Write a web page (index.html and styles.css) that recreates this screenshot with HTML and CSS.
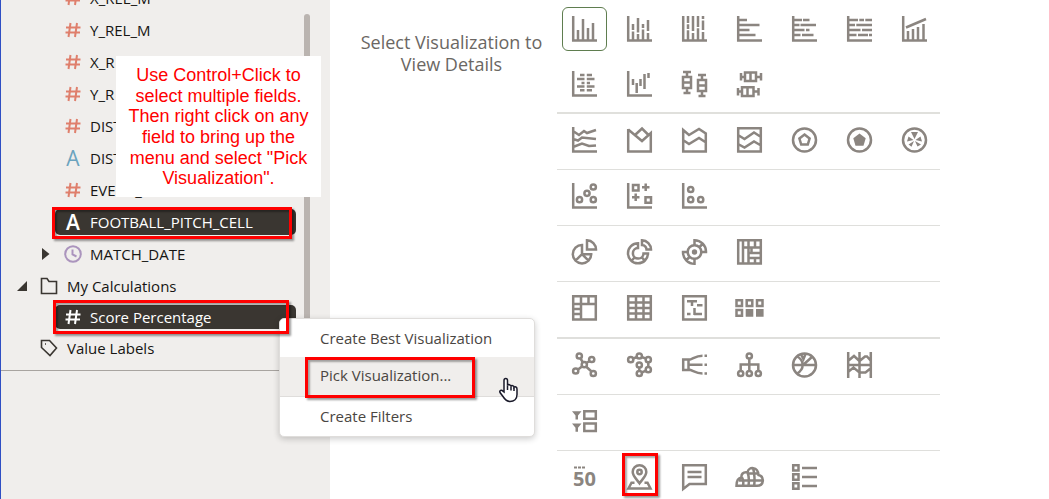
FILE: index.html
```html
<!DOCTYPE html>
<html lang="en">
<head>
<meta charset="utf-8">
<title>Pick Visualization</title>
<link rel="stylesheet" href="styles.css">
</head>
<body>
<svg class="defs" aria-hidden="true">
  <symbol id="hash" viewBox="0 0 16 16"><path d="M5.500 1L3.500 15M12 1L10 15M1 5.500H15.500M.500 10.500H15"/></symbol>
</svg>
<div class="app">
  <aside class="sidebar">
    <ul class="tree">
      <li class="row field"><svg class="kind measure"><use href="#hash"/></svg><span>X_REL_M</span></li>
      <li class="row field"><svg class="kind measure"><use href="#hash"/></svg><span>Y_REL_M</span></li>
      <li class="row field"><svg class="kind measure"><use href="#hash"/></svg><span>X_R</span></li>
      <li class="row field"><svg class="kind measure"><use href="#hash"/></svg><span>Y_R</span></li>
      <li class="row field"><svg class="kind measure"><use href="#hash"/></svg><span>DIST</span></li>
      <li class="row field"><span class="kind letter">A</span><span>DIST</span></li>
      <li class="row field"><svg class="kind measure"><use href="#hash"/></svg><span>EVENT_</span></li>
      <li class="row field selected"><span class="kind letter">A</span><span>FOOTBALL_PITCH_CELL</span><i class="mark mark-field"></i></li>
      <li class="row expandable"><svg class="arrow" viewBox="0 0 10 14"><path d="M1 1L8.500 7L1 13Z"/></svg><svg class="kind date" viewBox="0 0 18 18"><circle cx="9" cy="9" r="7.800"/><path d="M8.500 4.500V9.500L12.500 11.500"/></svg><span>MATCH_DATE</span></li>
      <li class="row folder"><svg class="arrow" viewBox="0 0 12 12"><path d="M11 1V11H1Z"/></svg><svg class="glyph" viewBox="0 0 18 18"><path d="M1.500 1.500H7L9 4.500H16.500V16.500H1.500Z"/></svg><span>My Calculations</span></li>
      <li class="row field short selected"><svg class="kind measure"><use href="#hash"/></svg><span>Score Percentage</span><i class="mark mark-score"></i></li>
      <li class="row labels"><svg class="glyph" viewBox="0 0 18 18"><path d="M1.500 1.500H9.500L16.500 9L10 16.500L1.500 8.500Z"/><path d="M5 5H6"/></svg><span>Value Labels</span></li>
    </ul>
    <div class="scrollbar"></div>
    <p class="callout">Use Control+Click to select multiple fields. Then right click on any field to bring up the menu and select "Pick Visualization".</p>
    <div class="menu" role="menu">
      <button class="item" role="menuitem">Create Best Visualization</button>
      <button class="item hover" role="menuitem">Pick Visualization...<i class="mark mark-item"></i></button>
      <button class="item last" role="menuitem">Create Filters</button>
      <svg class="cursor" viewBox="0 0 20 26"><path d="M6 15V3.500C6 .800 9.500 .800 9.500 3.500V8.500C10 7 13 7.500 13 9.500C13.500 8 16 8.500 16 10.300C17 9.200 19 10 19 12V17.500C19 22 16 24.500 12 24.500C8 24.500 6.500 22 5 19.500L2 15.500C1 13.500 3.500 12.500 5 14.200Z"/><path d="M9.500 8.500V13M13 9.500V13.500M16 10.500V14"/></svg>
    </div>
  </aside>

  <section class="details"><p>Select Visualization to View Details</p></section>

  <main class="gallery">
    <div class="group first">
      <button class="tile active" aria-label="Bar"><svg class="icon" viewBox="0 0 25 26"><path d="M1.200 0V24.500H25M6 14V24M11 3V24M16 12V24M21 7V24"/></svg></button>
      <button class="tile" aria-label="Stacked Bar"><svg class="icon" viewBox="0 0 25 26"><path d="M1.200 0V24.500H25M6 8V14M6 15.500V24M11 2V16.500M11 18V24M16 8V12M16 13.500V24M21 4V15M21 17V24"/></svg></button>
      <button class="tile" aria-label="100% Stacked Bar"><svg class="icon" viewBox="0 0 25 26"><path d="M1.200 0V24.500H25M6 0V7M6 8.300V13M6 14.300V24M11 0V15M11 17V24M16 0V11M16 12.300V24M21 0V3M21 4.500V14M21 16V24"/></svg></button>
      <button class="tile" aria-label="Horizontal Bar"><svg class="icon" viewBox="0 0 25 26"><path d="M1.200 0V24.500H25M2 4H10M2 9H22.500M2 14H12.500M2 19H18.500"/></svg></button>
      <button class="tile" aria-label="Horizontal Stacked"><svg class="icon" viewBox="0 0 25 26"><path d="M1.200 0V24.500H25M2 4H10M11 4H17.500M2 9H7.500M8.500 9H24M2 14H12.500M14 14H17.500M2 19H8.500M10 19H21.500"/></svg></button>
      <button class="tile" aria-label="100% Horizontal Stacked"><svg class="icon" viewBox="0 0 25 26"><path d="M1.200 0V24.500H25M2 4H11M12.300 4H17M18.300 4H25M2 9H8M9.300 9H25M2 14H13.500M15 14H25M2 19H9.500M11 19H21M22 19H25"/></svg></button>
      <button class="tile" aria-label="Combo"><svg class="icon" viewBox="0 0 25 26"><path d="M1.200 0V24.500H25M6 15V24M11 13V24M16 11V24M21.500 8V24M4 11.500L24 3"/></svg></button>
      <button class="tile" aria-label="Butterfly"><svg class="icon" viewBox="0 0 25 26"><path d="M1.200 0V24.500H25M8 4H12.500M14.800 4H20M5 8H12.500M14.800 8H22.500M9.500 12H12.500M14.800 12H18M5 15.500H12.500M14.800 15.500H22.500M8 19.300H12.500M14.800 19.300H20"/></svg></button>
      <button class="tile" aria-label="Waterfall"><svg class="icon" viewBox="0 0 25 26"><path d="M1.200 0V24.500H25M6 8V14M9.700 12V22M13.500 8V15M17.500 3V18M21.500 2V7"/></svg></button>
      <button class="tile" aria-label="Boxplot"><svg class="icon" viewBox="0 0 25 26"><path d="M1 1H9M5 1V5M1 6H9V17H1ZM1 11.500H9M5 17V22M1.500 22H8.500M16 4H24M20 4V8M16 9H24V20H16ZM16 14.500H24M20 20V25M16.500 25H23.500"/></svg></button>
      <button class="tile" aria-label="Horizontal Boxplot"><svg class="icon" viewBox="0 0 25 26"><path d="M4 2V9.500M4 6H8M8 1.500H19V10H8ZM13.500 1V10M19 6H24M24 2V9.500M1 17V24.500M1 20.500H5M5 16.200H16.500V25H5ZM10.500 16V25M16.500 20.500H21.500M21.500 17V24.500"/></svg></button>
    </div>
    <div class="group">
      <button class="tile" aria-label="Line"><svg class="icon" viewBox="0 0 25 26"><path d="M1.200 0V24.500H25M1 4L7 8L12 4L15 6L24 3M1 12L6 13.500L10 10.500L24 12M1 20L10 16.500L17 19L24 18.500"/></svg></button>
      <button class="tile" aria-label="Area"><svg class="icon" viewBox="0 0 25 26"><path d="M1.200 2V24.500H23.800V6L15 14L1.200 2.500M8 8L15 1.500L21.500 8"/></svg></button>
      <button class="tile" aria-label="Stacked Area"><svg class="icon" viewBox="0 0 25 26"><path d="M1.200 3V24.500H23.800V6.500L17 2L7 8ZM1 13L7 17L17 11L24 15.500"/></svg></button>
      <button class="tile" aria-label="100% Stacked Area"><svg class="icon" viewBox="0 0 25 26"><path d="M1.200 1.200H23.800V24.500H1.200ZM1 8L7.500 12L17 5.500L24 10M1 17L7.500 20.500L17 14.500L24 18.500"/></svg></button>
      <button class="tile" aria-label="Radar Line"><svg class="icon" viewBox="0 0 25 26"><circle cx="12.500" cy="13" r="11.500"/><path d="M12.500 7.500L17.600 11.500L15.800 17.500H9.200L7.400 11.500Z"/></svg></button>
      <button class="tile" aria-label="Radar Area"><svg class="icon" viewBox="0 0 25 26"><circle cx="12.500" cy="13" r="11.500"/><path class="solid" d="M12.500 6.500L18.700 11.200L16.500 18.700H8.500L6.300 11.200Z"/></svg></button>
      <button class="tile" aria-label="Radar Bar"><svg class="icon" viewBox="0 0 25 26"><circle cx="12.500" cy="13" r="11.500"/><path class="solid" d="M12.500 12L9 5H16ZM13.500 13L18.500 9.500L20 14.500ZM13 14L19 17.500L15.500 19.500ZM12 14L9.500 19.800L6.500 17.500ZM11.500 13L5 14.500L6.500 9.500Z"/></svg></button>
    </div>
    <div class="group">
      <button class="tile" aria-label="Scatter"><svg class="icon" viewBox="0 0 25 26"><path d="M1.200 0V24.500H25"/><circle cx="7.500" cy="16.700" r="2.600"/><circle cx="15" cy="10.300" r="2.600"/><circle cx="21.300" cy="4" r="2.600"/><circle cx="21.300" cy="16.700" r="2.600"/></svg></button>
      <button class="tile" aria-label="Categorical Scatter"><svg class="icon" viewBox="0 0 25 26"><path d="M1.200 0V24.500H25M6 2H11.500V7.500H6ZM18.700 .500V8M15 4.200H22.500M8.700 10.500V18M5 14.300H12.500M18.500 14.300H24V19.800H18.500Z"/></svg></button>
      <button class="tile" aria-label="Stacked Scatter"><svg class="icon" viewBox="0 0 25 26"><path d="M1.200 0V24.500H25"/><circle cx="8.700" cy="6.500" r="2.600"/><circle cx="8.700" cy="16.700" r="2.600"/><circle cx="18.700" cy="16.700" r="2.600"/></svg></button>
    </div>
    <div class="group">
      <button class="tile" aria-label="Pie"><svg class="icon" viewBox="0 0 25 26"><path d="M10 6A9.200 9.200 0 1 0 19.200 15.200H10ZM10 15.200L3.500 21.700M10 15.200L16.500 21.700M15 1.200V10.500H24A9.300 9.300 0 0 0 15 1.200Z"/></svg></button>
      <button class="tile" aria-label="Donut"><svg class="icon" viewBox="0 0 25 26"><path d="M11 4.300A10 10 0 1 0 21 14.500H16.500A5.300 5.300 0 1 1 11 9ZM7.500 18.500L4.500 22M15 18.500L18 22M15 1.200V6A5 5 0 0 1 19.500 10.500H24A9.300 9.300 0 0 0 15 1.200Z"/></svg></button>
      <button class="tile" aria-label="Sunburst"><svg class="icon" viewBox="0 0 25 26"><circle cx="12.500" cy="13" r="6.800"/><circle class="solid" cx="12.500" cy="13" r="2.700"/><path d="M12.500 6V1.200A11.500 11.500 0 0 1 24 13H19.500M17.500 8L20.500 5M12.500 20V24.800A11.500 11.500 0 0 1 1 13H5.500M7.500 18L4.500 21"/></svg></button>
      <button class="tile" aria-label="Treemap"><svg class="icon" viewBox="0 0 25 26"><path d="M1.200 1.200H23.800V24.500H1.200ZM6 1V24M11.500 1V24M6 8.500H24M11.500 14H24M11.500 19H24M18 2V9M18 19V24M14.500 9V14"/></svg></button>
    </div>
    <div class="group strong">
      <button class="tile" aria-label="Pivot"><svg class="icon" viewBox="0 0 25 26"><path d="M1.200 1.200H23.800V24.500H1.200ZM1 9H24M9 1V24M16.500 1V9M1 14H9M1 19H9"/></svg></button>
      <button class="tile" aria-label="Table"><svg class="icon" viewBox="0 0 25 26"><path d="M1.200 1.200H23.800V24.500H1.200ZM1 7.500H24M1 13H24M1 18.500H24M9 1V24M16.500 1V24"/></svg></button>
      <button class="tile" aria-label="Heat Matrix"><svg class="icon" viewBox="0 0 25 26"><path d="M1.200 1.200H23.800V24.500H1.200ZM5 6.300H15M10 6V11M15 10.300H20.500M12.500 13V20M12 19H20M5 19H8.500"/></svg></button>
      <button class="tile" aria-label="Tiles"><svg class="icon" viewBox="0 0 25 26"><path d="M-.500 5.200H5V11H-.500ZM9.700 5.200H15.300V11H9.700ZM20 5.200H25.500V11H20ZM-.500 15H5V20.700H-.500Z"/><path class="solid" d="M8.700 14H16.300V21.800H8.700ZM19 14H26.600V21.800H19Z"/></svg></button>
    </div>
    <div class="group">
      <button class="tile" aria-label="Network"><svg class="icon" viewBox="0 0 25 26"><circle cx="12.300" cy="12.700" r="2.600"/><circle cx="7.300" cy="4" r="2.600"/><circle cx="19.700" cy="7.500" r="2.600"/><circle cx="3.700" cy="19" r="2.600"/><circle cx="21.300" cy="21.500" r="2.600"/><path d="M8.500 6.500L11 10.500M14.500 11L17.500 9M10 14.500L6 17.500M14 14.500L19.500 19.500"/></svg></button>
      <button class="tile" aria-label="Circular Network"><svg class="icon" viewBox="0 0 25 26"><circle cx="3.700" cy="7.700" r="2.600"/><circle cx="12.300" cy="4" r="2.600"/><circle cx="21.300" cy="7.700" r="2.600"/><circle cx="12.300" cy="13" r="2.600"/><circle cx="21.300" cy="17.700" r="2.600"/><circle cx="12.300" cy="21.500" r="2.600"/><path d="M6 6.700L10 5M14.700 5L19 6.700M21.300 10.500V15M19 18.700L14.700 20.500M12.300 15.500V19"/></svg></button>
      <button class="tile" aria-label="Sankey"><svg class="icon" viewBox="0 0 25 26"><path d="M1.200 7.500H6.500V18H1.200ZM6.500 8C11 7.500 13 3.700 20.500 3.700M6.500 12.700H20.500M6.500 17.500C11 18 13 21.500 20.500 21.500M22.500 3.700H25M22.500 12.700H25M22.500 21.500H25"/></svg></button>
      <button class="tile" aria-label="Tree Diagram"><svg class="icon" viewBox="0 0 25 26"><circle cx="12.300" cy="4" r="2.600"/><circle cx="3.700" cy="21.500" r="2.600"/><circle cx="12.300" cy="21.500" r="2.600"/><circle cx="21.300" cy="21.500" r="2.600"/><path d="M12.300 7V18.500M3.700 18.500V12.500H21.300V18.500"/></svg></button>
      <button class="tile" aria-label="Chord"><svg class="icon" viewBox="0 0 25 26"><circle cx="12.500" cy="13" r="11.500"/><path d="M1 13H24M5 4.500C12 8 13 17 5 21.500M11 13L20.500 4.500M9 2.500L11.500 7L13.500 2"/></svg></button>
      <button class="tile" aria-label="Parallel Coordinates"><svg class="icon" viewBox="0 0 25 26"><path d="M1.200 0V26M12.500 0V26M23.800 0V26M1 13H24M1 9L7 4L12.500 9L18 4.500H20L24 9M1 20L6.500 15.500L12.500 20.500H18.500L24 16"/></svg></button>
    </div>
    <div class="group">
      <button class="tile" aria-label="Dashboard Filters"><svg class="icon" viewBox="0 0 25 26"><path class="solid" d="M0 3.300H9.500L6 7.500V11.500H3.500V7.500ZM0 15.500H9.500L6 19.700V23.700H3.500V19.700Z"/><path d="M12.300 3.200H23.800V10.800H12.300ZM12.300 15.500H23.800V23H12.300Z"/></svg></button>
    </div>
    <div class="group">
      <button class="tile metric" aria-label="Performance Tile"><svg class="dots" viewBox="0 0 12 3"><path d="M0 1.500H3M4 1.500H7M8 1.500H11"/></svg><span>50</span></button>
      <button class="tile" aria-label="Map"><svg class="icon" viewBox="0 0 25 26"><path d="M12.500 19.300C9.500 15 5.700 12 5.700 8A6.800 6.800 0 0 1 19.300 8C19.300 12 15.500 15 12.500 19.300ZM7.500 18.700H4.500L1.500 24.500H23.500L20.500 18.700H17.500"/><circle cx="12.500" cy="8" r="2.200"/></svg><i class="mark mark-map"></i></button>
      <button class="tile" aria-label="Text"><svg class="icon" viewBox="0 0 25 26"><path d="M1.200 1.200H23.800V20H7.500L1.200 25ZM5.500 8H19.500M5.500 13H19.500"/></svg></button>
      <button class="tile" aria-label="Language Narrative"><svg class="icon" viewBox="0 0 25 26"><path d="M-.500 21.800H20C27.500 21.800 27.500 12.500 21.500 11C21 2.500 11.500 2 10.500 8.500C6 7.500 4 10.500 4.500 13.500C1 14 -.500 17 -.500 21.800ZM2 16.500H25M10 9.500H21.500M5 13.500C6 15 6.500 19 6 21.500M10.500 8.500C12 12 12 18 11.500 21.500M16 4C17.500 8 18 18 17 21.500"/></svg></button>
      <button class="tile" aria-label="List"><svg class="icon" viewBox="0 0 25 26"><path d="M1.200 1.200H6.500V6.500H1.200ZM1.200 10.300H6.500V15.700H1.200ZM1.200 19.300H6.500V24.700H1.200ZM10 4H25M10 13H25M10 22H25"/></svg></button>
    </div>
  </main>
</div>
</body>
</html>
```
FILE: styles.css
```css
* { box-sizing: border-box; }
body {
  margin: 0;
  height: 100vh;
  overflow: hidden;
  background: #fff;
  color: #161513;
  font: 15px/20px "Open Sans", "Noto Sans", sans-serif;
}
button { border: 0; background: none; font: inherit; color: inherit; padding: 0; }
svg { display: block; fill: none; flex: none; }
.defs { position: absolute; width: 0; height: 0; }
.app { display: flex; height: 100%; }

.sidebar {
  position: relative;
  flex: none;
  width: 330px;
  background: #f0eeec;
  border-left: 1px solid #2f4fc4;
}
.tree {
  list-style: none;
  margin: -18px 0 0;
  padding: 0 0 6px;
  border-bottom: 1px solid #a8a4a0;
}
.row { position: relative; display: flex; align-items: center; height: 32px; padding-right: 35px; }
.short { height: 30px; }
.field { padding-left: 63px; }
.expandable { padding-left: 40px; }
.folder { padding-left: 15px; }
.labels { padding-left: 39px; }
.kind { width: 18px; height: 16px; margin-right: 8px; }
.measure { stroke: #df7f6c; stroke-width: 2; }
.letter { color: #6ba3be; font-size: 21px; text-align: center; flex: none; line-height: 16px; }
.date { height: 18px; stroke: #ab94bd; stroke-width: 2; }
.arrow { width: 10px; height: 14px; margin-right: 13px; fill: #3a3631; }
.folder .arrow { width: 12px; height: 12px; margin-right: 12px; }
.glyph { width: 18px; height: 18px; margin-right: 9px; stroke: #3a3631; stroke-width: 1.600; }
.selected { color: #fff; }
.selected::before {
  content: "";
  position: absolute;
  z-index: 0;
  inset: 3px 34px 3px 54px;
  border-radius: 5px;
  background: #3a3631;
}
.selected > * { position: relative; }
.selected .measure { stroke: #fff; }
.selected .letter { color: #fff; font-weight: 600; }

.mark, .row .mark {
  position: absolute;
  z-index: 3;
  border: 3px solid #f00;
  box-shadow: 2px 2px 2px #0006, inset 2px 2px 2px #0005;
}
.row .mark-field { inset: 1px 38px -1px 51px; }
.row .mark-score { inset: -2px 41px -2px 52px; }
.mark-item { inset: 0 59px -2px 25px; }
.mark-map { inset: -2px 4px 3px 5px; }

.scrollbar { position: absolute; top: 14px; right: 20px; width: 6px; height: 356px; border-radius: 3px; background: #bab4b0; }
.callout {
  position: absolute;
  top: 56px;
  left: 115px;
  width: 205px;
  margin: 0;
  padding: 9px 8px 8px;
  background: #fff;
  color: #f00;
  text-align: center;
  font: 18px/1.15 "Liberation Sans", Arial, sans-serif;
}

.menu {
  position: absolute;
  z-index: 2;
  top: 318px;
  left: 278px;
  width: 256px;
  border: 1px solid #dfdddb;
  border-radius: 5px;
  background: #fff;
  box-shadow: 0 2px 6px #0003;
  color: #4a4642;
}
.item { position: relative; display: block; width: 100%; height: 38px; padding-left: 40px; text-align: left; }
.hover { height: 39px; padding-bottom: 3px; background: #f0eeec; }
.last { height: 40px; padding-bottom: 2px; border-top: 1px solid #dfdddb; }
.cursor { position: absolute; top: 58px; right: 16px; width: 20px; height: 26px; fill: #fff; stroke: #1a1a2a; stroke-width: 1.500; }

.details { flex: 1; padding: 31px 0 0 16px; text-align: center; color: #6b6763; font-size: 18px; line-height: 22px; }
.details p { width: 190px; margin: 0 auto; }

.gallery { flex: none; width: 383px; margin-right: 109px; }
.group { display: grid; grid-template-columns: repeat(auto-fill, 45px); gap: 11px 10px; padding: 4px 0 7px 5px; border-bottom: 1px solid #dfdfdc; }
.first { padding: 7px 0 6px 5px; border-bottom: 2px solid #e0e0dc; }
.strong { border-bottom-width: 2px; }
.group:last-child { border-bottom: 0; }
.tile { position: relative; display: flex; align-items: center; justify-content: center; height: 44px; border-radius: 6px; }
.active { border: 1px solid #5f7d4f; }
.icon { width: 25px; height: 26px; overflow: visible; stroke: #8b8580; stroke-width: 2.500; }
.solid { fill: #8b8580; stroke: none; }
.metric { flex-direction: column; color: #8b8580; font-size: 20px; font-weight: 700; }
.dots { width: 12px; height: 3px; margin-right: 10px; stroke: #8b8580; stroke-width: 2; }
```
